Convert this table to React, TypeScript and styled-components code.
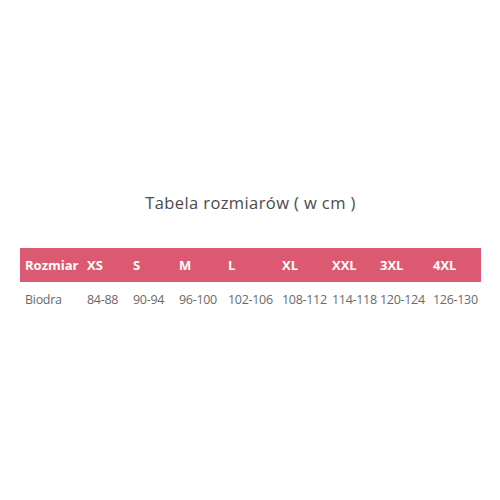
import styled, { createGlobalStyle } from "styled-components";

const GlobalStyle = createGlobalStyle`
  html, body { margin: 0; padding: 0; background: #fff; }
  body { font-family: "Open Sans", "Liberation Sans", sans-serif; }
`;

const Page = styled.div`
  width: 500px;
  height: 500px;
  padding: 192px 19px 0 20px;
  box-sizing: border-box;
  display: flex;
  flex-direction: column;
  align-items: center;
`;

const Title = styled.h2`
  margin: 0 0 34px;
  font-size: 16.5px;
  line-height: 22px;
  font-weight: 400;
  color: #4a4a4a;
  letter-spacing: 0.4px;
`;

const Table = styled.table`
  width: 461px;
  border-collapse: collapse;
  table-layout: fixed;
`;

const HeadCell = styled.th`
  background: #dc5a71;
  color: #fff;
  font-size: 13px;
  font-weight: 700;
  text-align: left;
  height: 34px;
  padding: 0 0 0 5px;
  white-space: nowrap;
`;

const Cell = styled.td`
  color: #6a6a6a;
  font-size: 12.5px;
  letter-spacing: -0.3px;
  text-align: left;
  height: 34px;
  padding: 0 0 0 5px;
  white-space: nowrap;
`;

const widths = [62, 46, 46, 49, 54, 50, 48, 53, 53];
const sizes = ["Rozmiar", "XS", "S", "M", "L", "XL", "XXL", "3XL", "4XL"];
const hips = ["Biodra", "84-88", "90-94", "96-100", "102-106", "108-112", "114-118", "120-124", "126-130"];

export default function App() {
  return (
    <>
      <GlobalStyle />
      <Page>
        <Title>Tabela rozmiarów ( w cm )</Title>
        <Table>
          <colgroup>
            {widths.map((w, i) => (
              <col key={i} style={{ width: w }} />
            ))}
          </colgroup>
          <thead>
            <tr>
              {sizes.map((s) => (
                <HeadCell key={s}>{s}</HeadCell>
              ))}
            </tr>
          </thead>
          <tbody>
            <tr>
              {hips.map((h) => (
                <Cell key={h}>{h}</Cell>
              ))}
            </tr>
          </tbody>
        </Table>
      </Page>
    </>
  );
}
